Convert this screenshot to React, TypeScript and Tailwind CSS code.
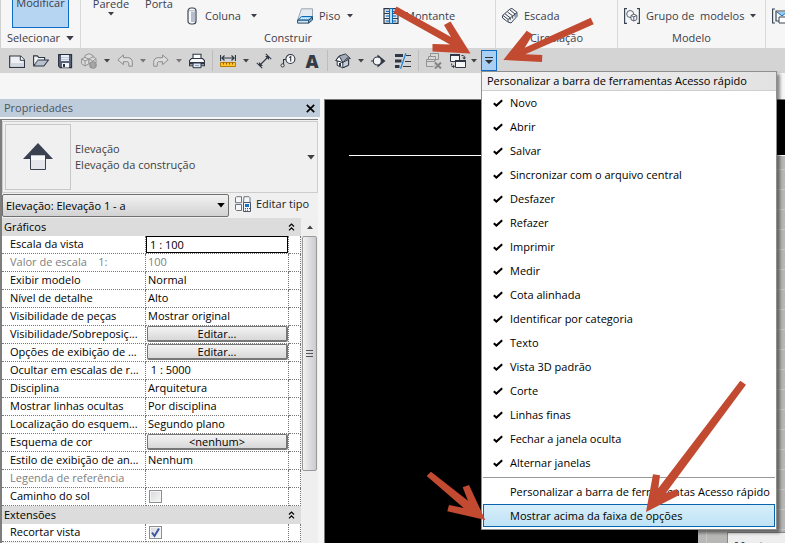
import type { ReactNode } from 'react';
import { clsx } from 'clsx';

const menuItems = [
  'Novo',
  'Abrir',
  'Salvar',
  'Sincronizar com o arquivo central',
  'Desfazer',
  'Refazer',
  'Imprimir',
  'Medir',
  'Cota alinhada',
  'Identificar por categoria',
  'Texto',
  'Vista 3D padrão',
  'Corte',
  'Linhas finas',
  'Fechar a janela oculta',
  'Alternar janelas',
];

interface PropertyRow {
  label: string;
  value?: string;
  kind?: 'text' | 'input' | 'button' | 'checkbox';
  checked?: boolean;
  disabled?: boolean;
}

const graphicsRows: PropertyRow[] = [
  { label: 'Escala da vista', value: '1 : 100', kind: 'input' },
  { label: 'Valor de escala    1:', value: '100', disabled: true },
  { label: 'Exibir modelo', value: 'Normal' },
  { label: 'Nível de detalhe', value: 'Alto' },
  { label: 'Visibilidade de peças', value: 'Mostrar original' },
  { label: 'Visibilidade/Sobreposiç...', value: 'Editar...', kind: 'button' },
  { label: 'Opções de exibição de ...', value: 'Editar...', kind: 'button' },
  { label: 'Ocultar em escalas de r...', value: ' 1 : 5000' },
  { label: 'Disciplina', value: 'Arquitetura' },
  { label: 'Mostrar linhas ocultas', value: 'Por disciplina' },
  { label: 'Localização do esquem...', value: 'Segundo plano' },
  { label: 'Esquema de cor', value: '<nenhum>', kind: 'button' },
  { label: 'Estilo de exibição de an...', value: 'Nenhum' },
  { label: 'Legenda de referência', value: '', disabled: true },
  { label: 'Caminho do sol', kind: 'checkbox', checked: false },
];

const extensionRows: PropertyRow[] = [
  { label: 'Recortar vista', kind: 'checkbox', checked: true },
];

function Icon({ children, className }: { children: ReactNode; className?: string }) {
  return (
    <svg viewBox="0 0 16 16" className={clsx('h-4 w-4 shrink-0', className)} fill="none" aria-hidden="true">
      {children}
    </svg>
  );
}

function Caret({ className }: { className?: string }) {
  return (
    <svg viewBox="0 0 6 4" className={clsx('shrink-0', className ?? 'h-1 w-1.5')} aria-hidden="true">
      <path d="M0 0h6L3 3.6z" fill="currentColor" />
    </svg>
  );
}

function NewIcon() {
  return (
    <Icon>
      <path d="M.7 3h10.8l4 4v7.4H.7z" fill="#eef0f5" stroke="#2f3744" strokeWidth="1.2" />
      <path d="M1.5 10h13.3v3.7H1.5z" fill="#d3d7e0" />
      <path d="M11.3 3v4.3h4.2" fill="#fff" stroke="#2f3744" />
    </Icon>
  );
}

function OpenIcon() {
  return (
    <Icon>
      <path d="M.6 12.8V2.9h3.6l1.5 1.6h5.9v2.4" fill="#f1f3f6" stroke="#2f3744" strokeWidth="1.1" />
      <path d="M.7 13 5 7h10.5l-4.6 6z" fill="#b9c1ce" stroke="#2f3744" strokeWidth="1.1" strokeLinejoin="round" />
      <path d="m2 10.8 3-3.7" stroke="#8b95a5" />
    </Icon>
  );
}

function SaveIcon() {
  return (
    <Icon>
      <path d="M1.6 1.6h13v13H3.2l-1.6-1.5z" fill="#56637a" stroke="#29313e" strokeWidth="1.1" />
      <path d="M4 2h8v6H4z" fill="#e9edf4" />
      <path d="M4 4.5h8M4 6.5h8" stroke="#c3cad6" />
      <path d="M5 10h7v4.5H5z" fill="#f5f6f9" />
      <path d="M6 11h2v3H6z" fill="#29313e" />
    </Icon>
  );
}

function SyncIcon() {
  return (
    <Icon>
      <g stroke="#929292" strokeWidth="1" fill="#dcdcdc" strokeLinejoin="round">
        <path d="m8 .7 4 1.8v4L8 8.4 4 6.5v-4z" />
        <path d="m4 4.3 4 1.9v4.6L4 13 .6 10.8V6z" />
        <path d="m12 3.8 3 1.8V10l-3.3 2L8 10.3V5.8z" />
        <path d="m.6 6 3.4 2 4-2M4 8v5M8 5.8 11.7 8 15 5.6M11.7 8v3" />
      </g>
      <circle cx="12" cy="12" r="3.8" fill="#949494" />
      <path d="M9.5 11h5M9.5 13h5M12 9v6" stroke="#b2b2b2" strokeWidth=".8" />
    </Icon>
  );
}

function UndoIcon() {
  return (
    <Icon>
      <path d="M.8 6.8 6.4 2v2.7h4.4c3 0 4.5 2 4.5 4.5v4h-3.5v-2.4c0-1.5-.6-2.1-2-2.1H6.4v2.9z" fill="#dcdcdc" stroke="#8c8c8c" strokeLinejoin="round" />
    </Icon>
  );
}

function RedoIcon() {
  return (
    <Icon>
      <path d="M15.2 6.8 9.6 2v2.7H5.2c-3 0-4.5 2-4.5 4.5v4h3.5v-2.4c0-1.5.6-2.1 2-2.1h3.4v2.9z" fill="#dcdcdc" stroke="#8c8c8c" strokeLinejoin="round" />
    </Icon>
  );
}

function PrintIcon() {
  return (
    <Icon>
      <path d="M4 6V1.2h8V6" fill="#fff" stroke="#2f3744" strokeWidth="1.1" />
      <path d="M2.5 5.5h11l2 2v5.3H.5V7.5z" fill="#f8f9fb" stroke="#2f3744" strokeWidth="1.1" />
      <path d="M.5 9h15v2.5H.5z" fill="#2f3744" />
      <path d="M4 10h8v4.7H4z" fill="#dce7f4" stroke="#2f3744" />
      <path d="M6 12.5h4" stroke="#8aa2bf" />
    </Icon>
  );
}

function MeasureIcon() {
  return (
    <Icon>
      <path d="M.5 2v6M15.5 2v6M2 5h12M4.5 2.5 2 5l2.5 2.5M11.5 2.5 14 5l-2.5 2.5" stroke="#2f3744" strokeWidth="1.2" />
      <path d="M.5 9.5h15v4H.5z" fill="#ffc52e" stroke="#b97b00" />
      <path d="M3.5 9.5v2M6.5 9.5v2M9.5 9.5v2M12.5 9.5v2" stroke="#8a5a00" />
    </Icon>
  );
}

function DimensionIcon() {
  return (
    <Icon>
      <path d="M3.5 12.5 12.5 3.5M.8 9.8l5.4 5.4M9.8.8l5.4 5.4" stroke="#2f3744" strokeWidth="1.1" />
      <path d="M3 9v4h4zM13 7V3H9z" fill="#2f3744" />
    </Icon>
  );
}

function TagIcon() {
  return (
    <Icon>
      <circle cx="10.4" cy="6" r="4.5" fill="#f8f8f8" stroke="#2f3744" strokeWidth="1.1" />
      <path d="M9.2 4.6 10.7 3.5v5.1" stroke="#2f3744" strokeWidth="1.1" />
      <path d="M5.9 6.5H3.5V11" stroke="#2f3744" strokeWidth="1.1" />
      <circle cx="2.6" cy="12.4" r="1.6" fill="#e8e8e8" stroke="#2f3744" />
    </Icon>
  );
}

function HouseIcon() {
  return (
    <Icon>
      <path d="M2.2 7.2v5.2l5.6 2.4 5.8-2.6V6.5L8.3 5z" fill="#f7f8fa" stroke="#2f3744" strokeLinejoin="round" />
      <path d="M7.8 9.4v5.4l5.8-2.6V6.5z" fill="#c5cbd6" stroke="#2f3744" />
      <path d="M.8 7.4 4.3 2.8 10.6 1l4.8 4.5-3.1-.6-4.4 4.6z" fill="#a3acba" stroke="#2f3744" strokeLinejoin="round" />
      <path d="m.8 7.4 3.5-4.2 3.6 6.3z" fill="#f7f8fa" stroke="#2f3744" />
      <path d="M4 10h2v3.5l-2-.8z" fill="#2f3744" />
    </Icon>
  );
}

function SectionIcon() {
  return (
    <Icon>
      <path d="M6.5 1.5v13L14.5 8z" fill="#2f3744" />
      <circle cx="6.3" cy="8" r="4" fill="#f3f4f6" stroke="#2f3744" strokeWidth="1.1" />
      <path d="M0 8h2.3" stroke="#2f3744" />
    </Icon>
  );
}

function ThinLinesIcon() {
  return (
    <Icon>
      <path d="M0 2.5h8M0 8h6.5M0 13.5h4.5" stroke="#2f3744" strokeWidth="3" />
      <path d="M11 2.5h5M10 8.5h6M8 13.5h8" stroke="#2f3744" />
      <path d="M10.8.3 5.6 15.7" stroke="#1683e2" strokeWidth="1.2" />
    </Icon>
  );
}

function CloseHiddenIcon() {
  return (
    <Icon>
      <g stroke="#929292" fill="#d8d8d8">
        <path d="M4.5 3.5v-3h8v6h-3" />
        <path d="M2.5 7.5v-4h7v6" />
        <path d="M.5 6.5h8v7h-8zM.5 8.5h8" />
      </g>
      <path d="m8.5 9 6.5 6.5M15 9l-6.5 6.5" stroke="#d4d4d4" strokeWidth="4" />
      <path d="m9 9.5 6 6M15 9.5l-6 6" stroke="#858585" strokeWidth="2" />
    </Icon>
  );
}

function SwitchIcon() {
  return (
    <Icon>
      <path d="M.5 1.5h9v7h-9z" fill="#f6f6f6" stroke="#2f3744" />
      <path d="M0 2h10" stroke="#2f3744" strokeWidth="2" />
      <path d="M5.5 7.5h10v7h-10z" fill="#f6f6f6" stroke="#2f3744" />
      <path d="M5 8h11" stroke="#2f3744" strokeWidth="2" />
      <path d="M11.5 2.5h2.7v3M1.7 10.5v3h2" stroke="#2f3744" strokeDasharray="2 1" />
      <path d="M12.2 4.5h4l-2 2zM3 11.8v3.4l2-1.7z" fill="#2f3744" />
    </Icon>
  );
}

function ColumnIcon() {
  return (
    <svg viewBox="0 0 10 18" className="h-[18px] w-2.5" aria-hidden="true">
      <rect x="1" y="1" width="8" height="16" rx="3" fill="#f8f9fb" stroke="#3c4655" strokeWidth="1.2" />
      <path d="M4 5h4v10H4z" fill="#b6bdc9" />
      <path d="M2 3.8h6" stroke="#a5adba" />
    </svg>
  );
}

function FloorIcon() {
  return (
    <Icon>
      <path d="M4.5.8h11v8.4l-3.8 3H.6z" fill="#e5eaf0" stroke="#9aa6b4" strokeLinejoin="round" />
      <path d="M4.5 8.5h11l-3.8 3.7H.6z" fill="#a7d7fa" stroke="#0d6bb5" />
      <path d="M.6 12.2h11v2.9H.6z" fill="#cbe7fb" stroke="#2d4a66" />
      <path d="M11.6 12.2 15.5 9v3l-3.9 3.1z" fill="#62aee2" stroke="#2d4a66" />
      <path d="M4 10.5h8" stroke="#fff" strokeDasharray="1 1" />
    </Icon>
  );
}

function MullionIcon() {
  return (
    <Icon>
      <path d="M1 .7h14v14.6H1z" fill="#e8ecf2" stroke="#2f3744" strokeWidth="1.2" />
      <path d="M1 5.500h14M1 10.500h14" stroke="#2f3744" />
      <path d="M2 3h12M2 8h12M2 13h12" stroke="#9cc7e8" />
      <path d="M6.500.5h3v15h-3z" fill="#b7defa" stroke="#0d6bb5" />
      <path d="M3 3.500h3M3 8h3M10 3.500h3M10 8h3M3 13h3M10 13h3" stroke="#0d6bb5" />
    </Icon>
  );
}

function StairIcon() {
  return (
    <Icon>
      <g fill="#f5f6f8" stroke="#3c4655" strokeLinejoin="round">
        <path d="m8 1 2-.5 5 3.8v4L9 15l-3-1-5.500-4V7.600z" />
        <path d="m.8 7.300 5.200 4.100V14M3 5.800l5.200 4v2.400M5.500 4l5.200 3.900v2.700M8 2l5 4v2.800" />
        <path d="m6 11.400 2.200-1.600M8.200 10l2.500-2M10.700 8 13 6.100l2-1.600" />
      </g>
    </Icon>
  );
}

function GroupIcon() {
  return (
    <Icon>
      <path d="M3 .6H.6v14.800H3M13 .6h2.400v14.800H13" stroke="#3c4655" strokeWidth="1.2" />
      <circle cx="6.200" cy="6" r="3.500" fill="#f6f6f6" stroke="#596373" />
      <path d="m7 7.500 2.800-1.400 3 1.400v4.200L9.800 13 7 11.700z" fill="#f6f6f6" stroke="#596373" />
      <path d="m7 7.500 2.800 1.300 3-1.300M9.800 8.800V13" stroke="#596373" />
    </Icon>
  );
}

function EditTypeIcon() {
  return (
    <Icon>
      <path d="M1.500.7h5v6h-6v-5zM9 .7h5l1 1v5H8.500zM.5 8.500h6v6h-5l-1-1z" fill="#f6f7f8" stroke="#6b7380" />
      <path d="M8.500 6.500h7v9h-7z" fill="#f6f7f8" stroke="#4c5563" />
      <path d="M10 8h4v3h-4z" fill="#1673c4" />
      <path d="M10 12.500h1m1 0h1m1 0h1M10 14.200h1m1 0h1" stroke="#4c5563" />
    </Icon>
  );
}

function RibbonPanel({ title, className, children }: { title: ReactNode; className?: string; children?: ReactNode }) {
  return (
    <section className={clsx('flex shrink-0 flex-col border-r border-[#d9d9d9]', className)}>
      <div className="flex h-7 items-center">{children}</div>
      <div className="flex h-5 items-center justify-center gap-1.5">{title}</div>
    </section>
  );
}

function Ribbon() {
  return (
    <header className="flex h-12 overflow-hidden border-l border-[#d0d0d0] bg-[#f6f6f6] text-[#3d3d4a]">
      <RibbonPanel
        className="w-20"
        title={
          <>
            Selecionar
            <Caret className="h-[5px] w-2" />
          </>
        }
      >
        <button className="-mt-4 ml-[11px] h-11 w-[57px] border border-[#0f6cc4] bg-[#b5d5f2] pb-1.5">Modificar</button>
      </RibbonPanel>
      <RibbonPanel className="w-[415px]" title="Construir">
        <button className="-mt-1 ml-3 flex w-9 flex-col items-center self-start">
          Parede
          <Caret />
        </button>
        <button className="-mt-1 ml-4 w-7 self-start">Porta</button>
        <button className="mt-1 ml-3.5 flex w-[70px] items-center">
          <ColumnIcon />
          <span className="mr-auto ml-2">Coluna</span>
          <Caret />
        </button>
        <button className="mt-1 ml-10 flex w-14 items-center">
          <FloorIcon />
          <span className="mr-auto ml-1.5">Piso</span>
          <Caret />
        </button>
        <button className="mt-1 ml-[30px] flex items-center gap-1.5">
          <MullionIcon />
          Montante
        </button>
      </RibbonPanel>
      <RibbonPanel className="w-[122px]" title="Circulação">
        <button className="mt-1 ml-1.5 flex items-center gap-1.5">
          <StairIcon />
          Escada
        </button>
      </RibbonPanel>
      <RibbonPanel className="w-[148px]" title="Modelo">
        <button className="mt-1 ml-1.5 flex items-center gap-1.5 whitespace-pre">
          <GroupIcon />
          Grupo de  modelos
          <Caret />
        </button>
      </RibbonPanel>
      <div className="flex h-7 items-center pl-1.5">
        <Icon className="mt-1">
          <path d="M3 1H.6v14H3M4 3h12v10H4z" fill="#f8f8f8" stroke="#3c4655" strokeWidth="1.2" />
          <path d="m5 4 5 4 5-4" fill="#9ac9ee" stroke="#0d6bb5" />
          <path d="M7 9h9v6H7z" fill="#fff" stroke="#3c4655" />
        </Icon>
      </div>
    </header>
  );
}

function ToolButton({ label, children }: { label: string; children: ReactNode }) {
  return (
    <button aria-label={label} className="h-4 w-4 shrink-0">
      {children}
    </button>
  );
}

function ToolCaret({ label, muted }: { label: string; muted?: boolean }) {
  return (
    <button aria-label={label} className={clsx('flex w-5 shrink-0 justify-center', muted ? 'text-[#777]' : 'text-[#444]')}>
      <Caret />
    </button>
  );
}

function Separator() {
  return (
    <div className="flex w-[15px] shrink-0 justify-center">
      <div className="h-[21px] w-px bg-[#bdbdbd]" />
    </div>
  );
}

function CustomizeMenu() {
  return (
    <div
      role="menu"
      className="absolute top-full left-0 z-10 w-[296px] border border-[#8f8f8f] bg-white pb-px text-left whitespace-nowrap text-black shadow-[3px_3px_3px_rgba(0,0,0,0.45)]"
    >
      <div className="h-[19px] border-b border-[#cfcfcf] bg-linear-to-r from-[#f2f2f2] to-[#e2e2e2] pl-[5px] leading-[18px]">
        Personalizar a barra de ferramentas Acesso rápido
      </div>
      {menuItems.map((item) => (
        <button key={item} role="menuitemcheckbox" aria-checked="true" className="flex h-6 w-full items-center gap-[7px] pl-[11px]">
          <svg viewBox="0 0 10 8" className="h-2 w-2.5" aria-hidden="true">
            <path d="m.8 4.200 2.600 2.400L9.200 1.200" fill="none" stroke="black" strokeWidth="2" />
          </svg>
          {item}
        </button>
      ))}
      <div className="mx-px mt-0.5 mb-0.5 h-px bg-[#999]" />
      <button role="menuitem" className="flex h-6 w-full items-center pl-7">
        Personalizar a barra de ferramentas Acesso rápido
      </button>
      <div className="px-px pb-px">
        <button role="menuitem" className="flex h-[23px] w-full items-center border border-[#0a64ad] bg-linear-to-b from-[#d6eefb] to-[#bfe3f5] pl-[26px]">
          Mostrar acima da faixa de opções
        </button>
      </div>
    </div>
  );
}

function QuickAccessBar() {
  return (
    <nav className="flex h-[25px] items-center bg-[#d4d4d4] pl-[9px]">
      <div className="flex gap-2">
        <ToolButton label="Novo"><NewIcon /></ToolButton>
        <ToolButton label="Abrir"><OpenIcon /></ToolButton>
        <ToolButton label="Salvar"><SaveIcon /></ToolButton>
        <ToolButton label="Sincronizar"><SyncIcon /></ToolButton>
      </div>
      <ToolCaret label="Opções de sincronização" />
      <ToolButton label="Desfazer"><UndoIcon /></ToolButton>
      <ToolCaret label="Lista de desfazer" muted />
      <ToolButton label="Refazer"><RedoIcon /></ToolButton>
      <ToolCaret label="Lista de refazer" muted />
      <ToolButton label="Imprimir"><PrintIcon /></ToolButton>
      <Separator />
      <ToolButton label="Medir"><MeasureIcon /></ToolButton>
      <ToolCaret label="Opções de medida" />
      <div className="flex items-center gap-2">
        <ToolButton label="Cota alinhada"><DimensionIcon /></ToolButton>
        <ToolButton label="Identificar por categoria"><TagIcon /></ToolButton>
        <button className="w-4 text-lg leading-4 font-extrabold text-[#333b47]">A</button>
      </div>
      <Separator />
      <ToolButton label="Vista 3D padrão"><HouseIcon /></ToolButton>
      <ToolCaret label="Opções de vista 3D" />
      <div className="flex gap-2">
        <ToolButton label="Corte"><SectionIcon /></ToolButton>
        <ToolButton label="Linhas finas"><ThinLinesIcon /></ToolButton>
      </div>
      <Separator />
      <div className="flex gap-2">
        <ToolButton label="Fechar a janela oculta"><CloseHiddenIcon /></ToolButton>
        <ToolButton label="Alternar janelas"><SwitchIcon /></ToolButton>
      </div>
      <button aria-label="Lista de janelas" className="flex w-[15px] justify-center text-[#444]">
        <Caret />
      </button>
      <div className="relative">
        <button
          aria-label="Personalizar"
          aria-expanded="true"
          className="flex h-[21px] w-4 items-center justify-center border border-[#0f6cc4] bg-[#a9d0f3] text-[#333]"
        >
          <svg viewBox="0 0 8 7" className="h-[7px] w-2" aria-hidden="true">
            <path d="M0 0h8v1H0zM0 3h8L4 7z" fill="currentColor" />
          </svg>
        </button>
        <CustomizeMenu />
      </div>
    </nav>
  );
}

function PropertyValue({ row, id }: { row: PropertyRow; id: string }) {
  if (row.kind === 'input') {
    return <input id={id} defaultValue={row.value} className="block h-[17px] w-full border border-black bg-white pl-[3px]" />;
  }

  if (row.kind === 'button') {
    return (
      <button id={id} className="ml-px block h-4 w-[141px] rounded-xs border border-r-2 border-b-2 border-[#777] bg-linear-to-b from-[#f4f4f4] to-[#d8d8d8] leading-[14px]">
        {row.value}
      </button>
    );
  }

  if (row.kind === 'checkbox') {
    return (
      <span className="relative ml-[3px] mt-0.5 block h-[13px] w-[13px]">
        <input
          id={id}
          type="checkbox"
          defaultChecked={row.checked}
          className="peer block h-[13px] w-[13px] appearance-none border border-[#8e8f8f] bg-linear-to-br from-[#d5d8dc] to-[#f8f8f8] shadow-[inset_0_0_0_1px_#f4f4f4]"
        />
        <svg viewBox="0 0 13 13" className="pointer-events-none absolute inset-0 hidden peer-checked:block" aria-hidden="true">
          <path d="m3 6.500 2.500 3.500L10 2.500" fill="none" stroke="#3c579f" strokeWidth="2" />
        </svg>
      </span>
    );
  }

  return <span id={id} className="block pl-0.5 whitespace-pre">{row.value}</span>;
}

function GroupHeader({ title }: { title: string }) {
  return (
    <tr className="h-[18px] bg-[#dcdcdc]">
      <th colSpan={3} className="p-0 text-left font-normal">
        <button className="flex w-full items-center justify-between pr-1.5 pl-0.5 leading-[18px]">
          {title}
          <svg viewBox="0 0 7 8" className="h-2 w-[7px]" aria-hidden="true">
            <path d="m1 3.500 2.500-2.500L6 3.500M1 7.300l2.500-2.500L6 7.300" fill="none" stroke="black" strokeWidth="1.2" />
          </svg>
        </button>
      </th>
    </tr>
  );
}

function PropertyRows({ rows, prefix }: { rows: PropertyRow[]; prefix: string }) {
  const cell = 'h-[18px] border-r border-b border-dotted border-[#777] p-0 align-top leading-4';
  return rows.map((row, i) => (
    <tr key={row.label} className={row.disabled ? 'text-[#808080]' : 'text-black'}>
      <td className={clsx(cell, 'pl-2 whitespace-pre')}>
        <label htmlFor={`${prefix}-${i}`}>{row.label}</label>
      </td>
      <td className={cell}>
        <PropertyValue row={row} id={`${prefix}-${i}`} />
      </td>
      <td className={cell} />
    </tr>
  ));
}

function PropertiesPanel() {
  return (
    <aside className="flex w-80 shrink-0 flex-col">
      <div className="flex h-[18px] shrink-0 items-center justify-between bg-[#bfcddb] pr-[5px] pl-1 text-[#4a5560]">
        <h2>Propriedades</h2>
        <button aria-label="Fechar">
          <svg viewBox="0 0 9 9" className="h-[9px] w-[9px]" aria-hidden="true">
            <path d="m.8.8 7.400 7.400M8.200.8.8 8.200" stroke="black" strokeWidth="1.7" />
          </svg>
        </button>
      </div>
      <div className="mt-0.5 mr-0.5 flex min-h-0 flex-1 flex-col overflow-hidden border-t border-l-2 border-[#7d7d7d] bg-[#f0f0f0]">
        <div className="mt-px flex h-[72px] shrink-0 items-center border border-[#cdcdcd] px-0.5 text-[#404040]">
          <div className="flex h-[66px] w-[66px] items-center justify-center border border-[#c8c8c8]">
            <svg viewBox="0 0 30 30" className="h-[30px] w-[30px]" aria-hidden="true">
              <path d="M15 1 30 17H0z" fill="#3a4150" />
              <path d="M7.500 13h15v14.500h-15z" fill="#e3e6eb" stroke="#3a4150" />
              <path d="M8 13.500h14V18H8z" fill="#f7f8fa" />
            </svg>
          </div>
          <div className="ml-1 flex-1 leading-4">
            <p>Elevação</p>
            <p>Elevação da construção</p>
          </div>
          <button aria-label="Alterar tipo">
            <Caret className="h-[5px] w-2" />
          </button>
        </div>
        <div className="mt-px flex h-6 shrink-0 items-start">
          <div className="relative flex-1 text-black">
            <select
              aria-label="Vista"
              className="block h-[23px] w-full appearance-none rounded-xs border border-[#707070] bg-linear-to-b from-[#f2f2f2] to-[#d2d2d2] pl-[3px]"
            >
              <option>Elevação: Elevação 1 - a</option>
            </select>
            <Caret className="pointer-events-none absolute top-[9px] right-1 h-[5px] w-2" />
          </div>
          <button className="flex h-5 w-[89px] items-center gap-[5px] pl-1.5 whitespace-nowrap text-[#222]">
            <EditTypeIcon />
            Editar tipo
          </button>
        </div>
        <div className="flex min-h-0 flex-1">
          <div className="flex-1 overflow-hidden">
            <table className="w-full table-fixed border-separate border-spacing-0 bg-white">
              <colgroup>
                <col className="w-36" />
                <col />
                <col className="w-3" />
              </colgroup>
              <tbody>
                <GroupHeader title="Gráficos" />
                <PropertyRows rows={graphicsRows} prefix="graficos" />
                <GroupHeader title="Extensões" />
                <PropertyRows rows={extensionRows} prefix="extensoes" />
              </tbody>
            </table>
          </div>
          <div className="flex w-[17px] flex-col items-center bg-[#efefef]">
            <div className="flex h-[18px] items-center text-[#444]">
              <Caret className="h-1 w-1.5 rotate-180" />
            </div>
            <div className="flex h-[235px] w-[15px] flex-col items-center justify-center gap-px rounded-xs border border-[#999] bg-linear-to-r from-[#f3f3f3] to-[#cacad0]">
              <div className="h-px w-[7px] bg-[#555]" />
              <div className="mt-px h-px w-[7px] bg-[#555]" />
              <div className="mt-px h-px w-[7px] bg-[#555]" />
            </div>
          </div>
        </div>
      </div>
    </aside>
  );
}

function DrawingArea() {
  return (
    <main className="ml-1 flex flex-1 flex-col overflow-hidden border-t border-l border-[#777] bg-black">
      <div className="mt-[55px] ml-6 h-px shrink-0 bg-white" />
      <div className="flex min-h-0 flex-1">
        <div className="w-[373px] shrink-0" />
        <div className="flex flex-1 flex-col overflow-hidden bg-[#b7b7b5] bg-[repeating-linear-gradient(to_bottom,transparent_0,transparent_13px,#c9c9c7_13px,#c9c9c7_14px,transparent_14px,transparent_20px)] pl-2">
          <div className="flex-1 border-l border-[#c9c9c7] pt-[376px] pl-5">
            <div className="h-8 border-t border-l border-[#888] bg-[#eee] pt-1.5 pl-1.5 text-xs font-bold text-[#444]">Mostrar</div>
          </div>
        </div>
      </div>
    </main>
  );
}

function CalloutArrows() {
  return (
    <svg viewBox="0 0 785 543" width="785" height="543" className="pointer-events-none absolute top-0 left-0 z-20" fill="#c14a31" aria-hidden="true">
      <path d="M396.500 6.500 451 37l-7-12 6.500-3.500 20 32-38-2V44l17.500.5L393.500 13z" />
      <path d="m503.300 60 23.400-29.300 6 3.800-8 13.200 66-30 3 6.600-68.400 30 17 .7-.3 7z" />
      <path d="m431 471.700 37 29-5.300-13.400 6.300-2.300 16.300 35-38-8.700L449 505l14.700 3-37-32z" />
      <path d="m646 512 7-37.700 7 1-1.700 13 82-107.600 5.700 4-80.300 108.600L677 489l2.300 6z" />
    </svg>
  );
}

export default function App() {
  return (
    <div className="relative flex h-screen flex-col overflow-hidden bg-[#f6f6f6] font-['Open_Sans','Noto_Sans',sans-serif] text-[11px] leading-4">
      <Ribbon />
      <QuickAccessBar />
      <div className="mt-[26px] flex min-h-0 flex-1">
        <PropertiesPanel />
        <DrawingArea />
      </div>
      <CalloutArrows />
    </div>
  );
}
